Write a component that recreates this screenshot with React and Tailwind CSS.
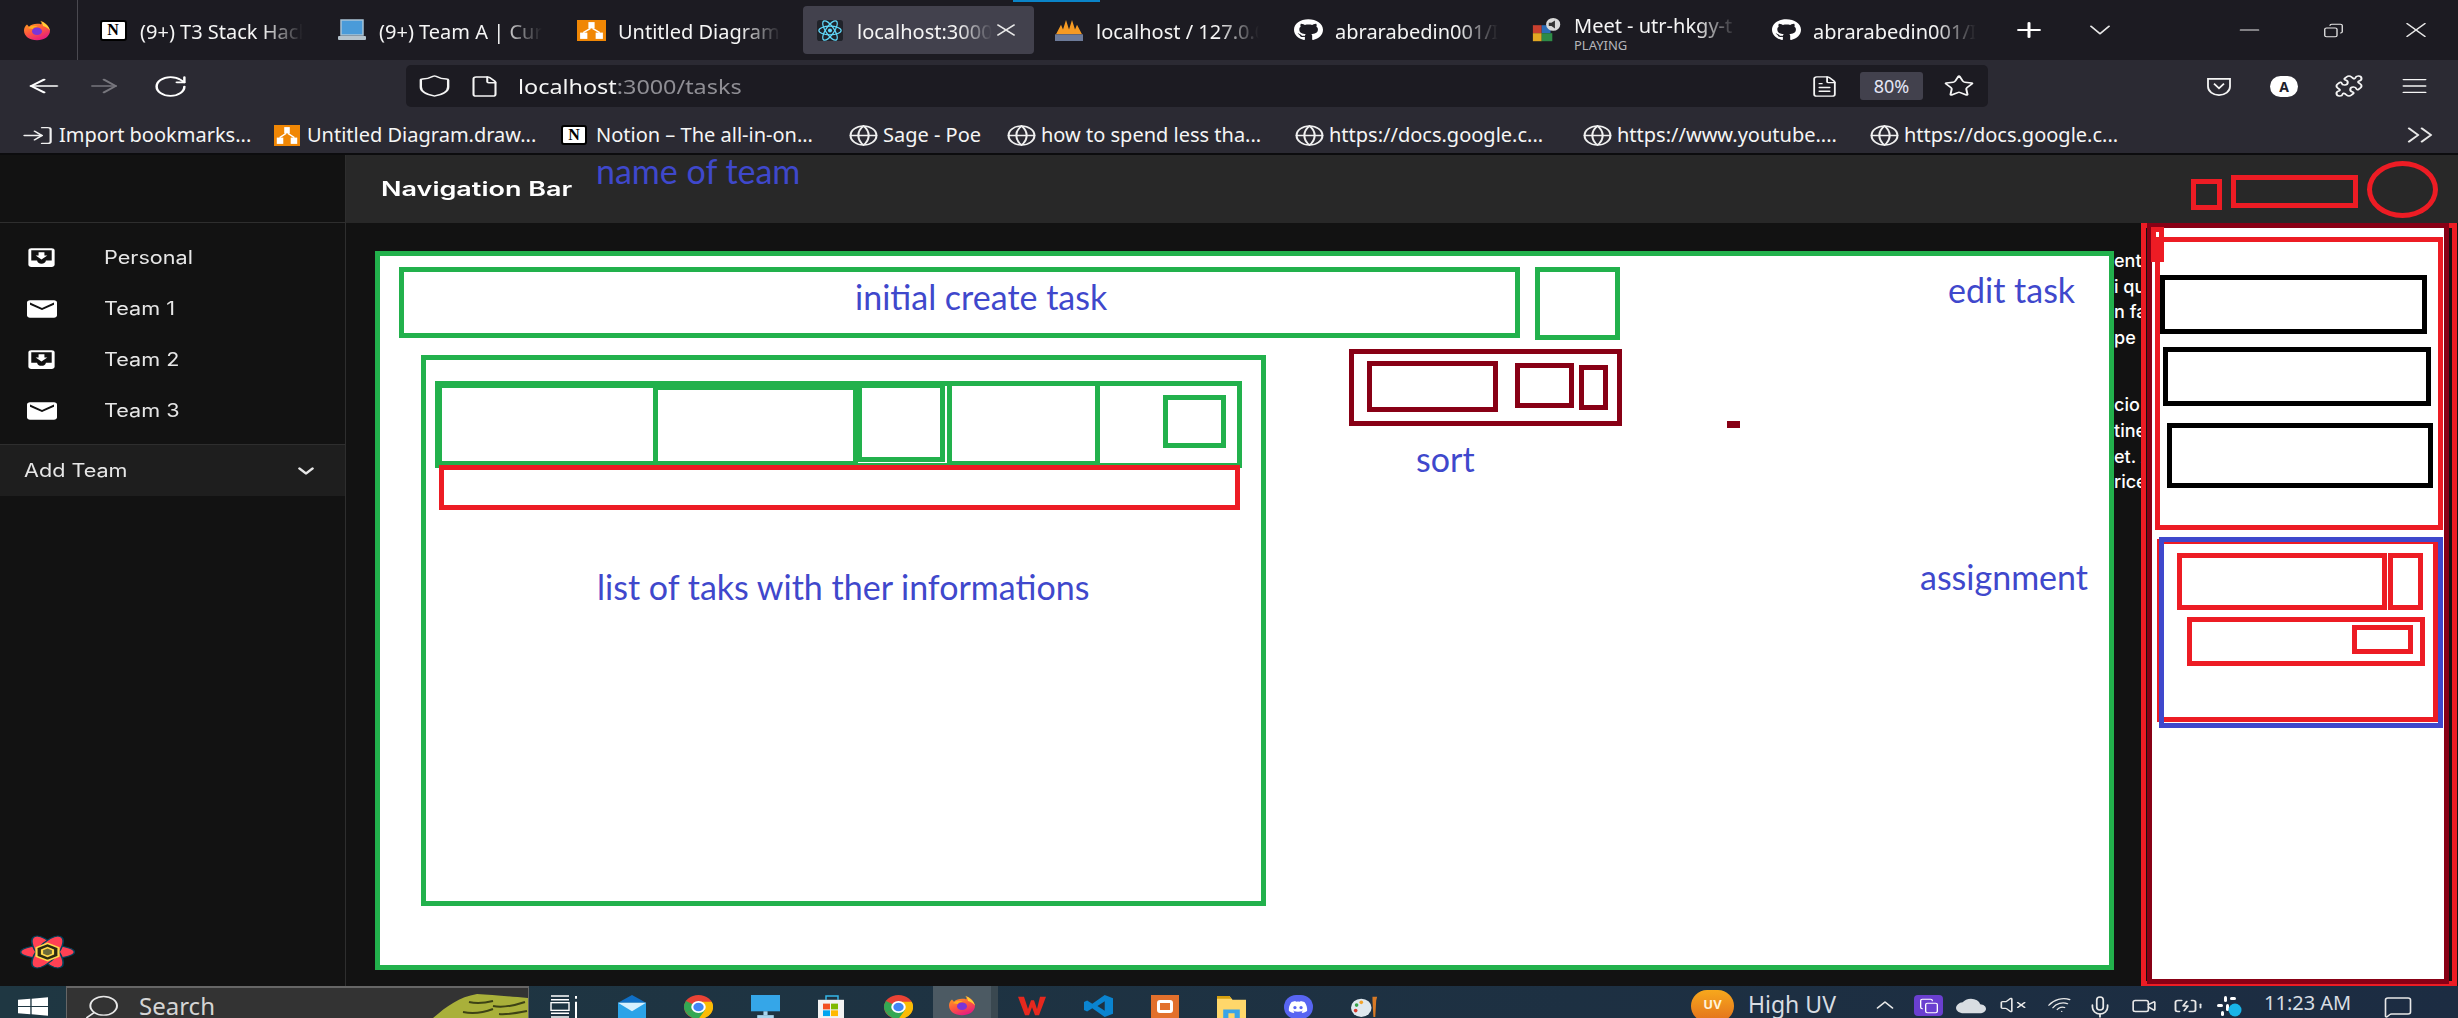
import React from "react";
import {
  ArrowLeft, ArrowRight, RotateCw, Shield, File, FileText, Star, X, Plus, ChevronDown, Minus, Copy,
  Globe, Puzzle, Menu, ChevronsRight, Search, ChevronUp, VolumeX, Wifi, Mic, MessageSquare, LogIn, Video, BatteryCharging,
} from "lucide-react";
import { MdMoveToInbox, MdMail, MdCloud } from "react-icons/md";
import { FaGithub, FaDiscord, FaWindows } from "react-icons/fa";

const sans = "font-['Noto_Sans','Open_Sans',sans-serif]";

function Firefox({ className }) {
  return (
    <svg viewBox="0 0 28 28" preserveAspectRatio="none" className={className}>
      <defs>
        <linearGradient id="ffg" x1="0.2" y1="0" x2="0.7" y2="1">
          <stop offset="0" stopColor="#ffa51f" />
          <stop offset="0.5" stopColor="#ff5a3c" />
          <stop offset="1" stopColor="#e31587" />
        </linearGradient>
      </defs>
      <path d="M18 1c3 2 8 6 9 13 0 8-6 13-13 13S1 22 1 14c0-3 1-6 3-8l2 3c2-3 5-4 8-4 2 0 3 0 4 1 1-2 1-3 0-5z" fill="url(#ffg)" />
      <circle cx="14" cy="15" r="5" fill="#7a35d8" />
      <path d="M17 1c5 3 9 7 10 13-2-3-4-5-7-6 0-2-1-5-3-7z" fill="#ffd234" />
      <path d="M5 11c3-4 7-4 10-2-3 0-5 1-5 3z" fill="#ffb01f" />
    </svg>
  );
}

function Notion({ className }) {
  return (
    <span className={`flex items-center justify-center bg-white border-[2px] border-black rounded-[3px] text-black font-bold font-['Liberation_Serif',serif] text-[16px] leading-none ${className}`}>
      N
    </span>
  );
}

function Drawio({ className }) {
  return (
    <svg viewBox="0 0 28 20" preserveAspectRatio="none" className={className}>
      <rect width="28" height="20" fill="#f08705" />
      <rect x="11" y="2" width="6" height="6" fill="#fff" />
      <rect x="3" y="12" width="7" height="6" fill="#fff" />
      <rect x="18" y="12" width="7" height="6" fill="#fff" />
      <path d="M13 8l-7 4M15 8l7 4" stroke="#fff" strokeWidth="1.5" />
    </svg>
  );
}

function Laptop({ className }) {
  return (
    <svg viewBox="0 0 30 22" preserveAspectRatio="none" className={className}>
      <rect x="4" y="1" width="22" height="15" fill="#4a9bd9" stroke="#a9c4d6" strokeWidth="1.5" />
      <rect x="1" y="17" width="28" height="4" rx="1" fill="#b5c3cc" />
    </svg>
  );
}

function ReactTab({ className }) {
  return (
    <svg viewBox="0 0 28 22" preserveAspectRatio="none" className={className}>
      <rect width="28" height="22" rx="3" fill="#20232a" />
      <g fill="none" stroke="#61dafb" strokeWidth="1.3">
        <ellipse cx="14" cy="11" rx="12" ry="4.5" />
        <ellipse cx="14" cy="11" rx="12" ry="4.5" transform="rotate(55 14 11)" />
        <ellipse cx="14" cy="11" rx="12" ry="4.5" transform="rotate(-55 14 11)" />
      </g>
      <circle cx="14" cy="11" r="2.2" fill="#61dafb" />
    </svg>
  );
}

function Pma({ className }) {
  return (
    <svg viewBox="0 0 30 22" preserveAspectRatio="none" className={className}>
      <path d="M2 15L7 5l2 5 3-10 3 10 3-10 3 10 2-5 5 10z" fill="#f59a23" />
      <rect x="1" y="15" width="28" height="7" fill="#6c7a99" />
    </svg>
  );
}

function MeetIcon({ className }) {
  return (
    <svg viewBox="0 0 34 30" preserveAspectRatio="none" className={className}>
      <rect x="1" y="9" width="10" height="10" fill="#c9402f" />
      <rect x="11" y="9" width="10" height="10" fill="#2b6cb5" />
      <rect x="1" y="19" width="10" height="10" fill="#e2a823" />
      <rect x="11" y="19" width="12" height="10" fill="#2e8b47" />
      <circle cx="24" cy="8" r="8" fill="#d9d9d9" />
      <path d="M19 6h3l4-3v10l-4-3h-3z" fill="#333" />
    </svg>
  );
}

function Logo({ className }) {
  return (
    <svg viewBox="0 0 100 100" preserveAspectRatio="none" className={className}>
      <g fill="#ff4154" stroke="#00435b" strokeWidth="3">
        <ellipse cx="50" cy="50" rx="49" ry="19" />
        <ellipse cx="50" cy="50" rx="49" ry="19" transform="rotate(62 50 50)" />
        <ellipse cx="50" cy="50" rx="49" ry="19" transform="rotate(-62 50 50)" />
      </g>
      <polygon points="50,26 70,38 70,62 50,74 30,62 30,38" fill="#2b2a12" stroke="#ffd94c" strokeWidth="4" />
      <polygon points="50,38 60,44 60,56 50,62 40,56 40,44" fill="#6b6a3a" stroke="#ffd94c" strokeWidth="4" />
    </svg>
  );
}

function Chrome({ className }) {
  return (
    <svg viewBox="0 0 28 28" className={className} preserveAspectRatio="none">
      <circle cx="14" cy="14" r="14" fill="#ea4335" />
      <path d="M14 14L2 21A14 14 0 0 1 2 7z" fill="#34a853" />
      <path d="M14 14l-12 7A14 14 0 0 0 26 21z" fill="#34a853" />
      <path d="M14 8h12.8A14 14 0 0 1 14 28l6-10z" fill="#fbbc04" />
      <circle cx="14" cy="14" r="7" fill="#fff" />
      <circle cx="14" cy="14" r="5" fill="#4285f4" />
    </svg>
  );
}

function Tab({ icon, children, active, close, sub }) {
  return (
    <div className={`relative w-[231px] h-[48px] mx-[4px] shrink-0 flex items-center rounded-[4px] ${active ? "bg-[#42414d]" : ""}`}>
      <div className="w-[54px] shrink-0 flex justify-center">{icon}</div>
      <div className={`flex flex-col min-w-0 ${sub ? "mt-[2px]" : "mt-[3px]"}`}>
        <div className={`overflow-hidden whitespace-nowrap text-[#f5f5f5] text-[20px] leading-[24px] [mask-image:linear-gradient(to_right,black_75%,transparent)] ${active ? "w-[135px]" : "w-[163px]"}`}>
          {children}
        </div>
        {sub ? <div className="text-[#b5b5b9] text-[13px] leading-[13px] -mb-[3px] mt-[1px]">{sub}</div> : null}
      </div>
      {close ? <X className="ml-[-2px] w-[32px] h-[20px] text-[#e8e8e8] shrink-0" strokeWidth={1.5} preserveAspectRatio="none" /> : null}
    </div>
  );
}

function Bookmark({ className, icon, children }) {
  return (
    <div className={`flex items-center shrink-0 h-full ${className}`}>
      <div className="w-[26px] flex justify-center shrink-0">{icon}</div>
      <span className="ml-[-4px] text-[20px] whitespace-nowrap text-[#f5f5f5]">{children}</span>
    </div>
  );
}

function BmGlobe() {
  return <Globe className="w-[31px] h-[23px] text-[#f0f0f0] shrink-0" strokeWidth={1.6} preserveAspectRatio="none" />;
}

function Slot({ className, children }) {
  return <div className={`flex justify-center items-center shrink-0 ${className}`}>{children}</div>;
}

function SideItem({ icon, children }) {
  return (
    <div className="h-[51px] flex items-center">
      <div className="w-[83px] flex justify-center shrink-0">{icon}</div>
      <span className="ml-[21px] text-[18px] text-[#e6e6e6] origin-left scale-x-[1.2] font-['Inter',sans-serif]">{children}</span>
    </div>
  );
}

function Box({ className }) {
  return <div className={`absolute ${className}`} />;
}

function Label({ className, children }) {
  return <div className={`absolute whitespace-nowrap text-[#3f48cc] font-['Lato',sans-serif] leading-none text-[34px] ${className}`}>{children}</div>;
}

export default function App() {
  return (
    <div className={`relative w-[2458px] h-[1018px] overflow-hidden flex flex-col bg-[#121212] ${sans}`}>
      {/* tab strip */}
      <div className="h-[60px] shrink-0 bg-[#1c1b22] flex items-center relative">
        <div className="w-[78px] h-full shrink-0 border-r border-[#4a4950] flex items-center justify-center pr-[3px]">
          <Firefox className="w-[28px] h-[21px]" />
        </div>
        <div className="flex items-center pl-[4px]">
          <Tab icon={<Notion className="w-[27px] h-[21px]" />}>(9+) T3 Stack Hack</Tab>
          <Tab icon={<Laptop className="w-[30px] h-[22px]" />}>(9+) Team A | Cur</Tab>
          <Tab icon={<Drawio className="w-[29px] h-[21px]" />}>Untitled Diagram.</Tab>
          <Tab active close icon={<ReactTab className="w-[26px] h-[21px]" />}>localhost:3000/</Tab>
          <Tab icon={<Pma className="w-[30px] h-[21px]" />}>localhost / 127.0.0</Tab>
          <Tab icon={<FaGithub className="w-[29px] h-[22px] text-white" preserveAspectRatio="none" />}>abrarabedin001/I</Tab>
          <Tab sub="PLAYING" icon={<MeetIcon className="w-[30px] h-[24px]" />}>Meet - utr-hkgy-t</Tab>
          <Tab icon={<FaGithub className="w-[29px] h-[22px] text-white" preserveAspectRatio="none" />}>abrarabedin001/I</Tab>
        </div>
        <Slot className="w-[36px] ml-[17px]"><Plus className="w-[38px] h-[24px] text-white" strokeWidth={2} preserveAspectRatio="none" /></Slot>
        <Slot className="w-[36px] ml-[35px]"><ChevronDown className="w-[44px] h-[30px] text-[#e8e8e8]" strokeWidth={1.3} preserveAspectRatio="none" /></Slot>
        <Slot className="w-[40px] ml-[111px]"><Minus className="w-[31px] h-[22px] text-[#e8e8e8]" strokeWidth={1.2} preserveAspectRatio="none" /></Slot>
        <Slot className="w-[40px] ml-[44px]"><Copy className="w-[21px] h-[15px] text-[#e8e8e8] -scale-x-100" strokeWidth={1.5} preserveAspectRatio="none" /></Slot>
        <Slot className="w-[40px] ml-[43px]"><X className="w-[36px] h-[26px] text-[#e8e8e8]" strokeWidth={1} preserveAspectRatio="none" /></Slot>
      </div>

      {/* toolbar */}
      <div className="h-[47px] shrink-0 bg-[#2b2a33] flex items-start pt-[5px]">
        <div className="w-[406px] h-[42px] shrink-0 flex items-center text-white">
          <Slot className="w-[88px]"><ArrowLeft className="w-[44px] h-[22px]" strokeWidth={1.7} preserveAspectRatio="none" /></Slot>
          <Slot className="w-[40px] ml-[-4px]"><ArrowRight className="w-[44px] h-[22px] text-[#77767d]" strokeWidth={1.7} preserveAspectRatio="none" /></Slot>
          <Slot className="w-[40px] ml-[26px]"><RotateCw className="w-[37px] h-[25px]" strokeWidth={1.6} preserveAspectRatio="none" /></Slot>
        </div>
        <div className="w-[1582px] h-[42px] shrink-0 bg-[#1c1b22] rounded-[5px] flex items-center text-[#f5f5f5]">
          <Slot className="w-[56px]"><Shield className="w-[41px] h-[24px]" strokeWidth={1.4} preserveAspectRatio="none" /></Slot>
          <Slot className="w-[44px]"><File className="w-[33px] h-[23px]" strokeWidth={1.5} preserveAspectRatio="none" /></Slot>
          <div className="ml-[12px] pt-[3px] text-[19px] whitespace-nowrap origin-left scale-x-[1.23]">
            localhost<span className="text-[#8f8e94]">:3000/tasks</span>
          </div>
          <div className="flex-1" />
          <Slot className="w-[40px]"><FileText className="w-[31px] h-[23px]" strokeWidth={1.4} preserveAspectRatio="none" /></Slot>
          <div className="w-[63px] h-[28px] ml-[16px] rounded-[3px] bg-[#42414d] text-[18px] flex items-center justify-center text-[#e4e6f5]">80%</div>
          <Slot className="w-[40px] ml-[16px] mr-[9px]"><Star className="w-[32px] h-[24px]" strokeWidth={1.5} preserveAspectRatio="none" /></Slot>
        </div>
        <div className="flex items-center h-[42px] text-[#f5f5f5]">
          <Slot className="w-[40px] ml-[211px]">
            <svg viewBox="0 0 26 20" preserveAspectRatio="none" className="w-[26px] h-[19px]" fill="none" stroke="currentColor" strokeWidth="1.8">
              <path d="M2 2h22v8c0 5-5 9-11 9S2 15 2 10z" />
              <path d="M8 7l5 5 5-5" />
            </svg>
          </Slot>
          <Slot className="w-[40px] ml-[25px]">
            <div className="w-[28px] h-[21px] rounded-full bg-white text-[#20202a] text-[14px] font-bold flex items-center justify-center">A</div>
          </Slot>
          <Slot className="w-[40px] ml-[25px]"><Puzzle className="w-[30px] h-[24px]" strokeWidth={1.6} preserveAspectRatio="none" /></Slot>
          <Slot className="w-[40px] ml-[25px]"><Menu className="w-[33px] h-[22px]" strokeWidth={1.5} preserveAspectRatio="none" /></Slot>
        </div>
      </div>

      {/* bookmarks */}
      <div className="h-[46px] shrink-0 bg-[#2b2a33] flex items-center pl-[24px] pt-[10px]">
        <Bookmark className="w-[250px]" icon={<LogIn className="w-[35px] h-[21px] text-[#f0f0f0] shrink-0" strokeWidth={1.5} preserveAspectRatio="none" />}>
          <span className="ml-[13px]">Import bookmarks...</span>
        </Bookmark>
        <Bookmark className="w-[287px]" icon={<Drawio className="w-[29px] h-[21px]" />}>
          <span className="ml-[11px]">Untitled Diagram.draw...</span>
        </Bookmark>
        <Bookmark className="w-[289px]" icon={<Notion className="w-[26px] h-[20px]" />}>
          <span className="ml-[13px]">Notion – The all-in-on...</span>
        </Bookmark>
        <Bookmark className="w-[158px]" icon={<BmGlobe />}><span className="ml-[11px]">Sage - Poe</span></Bookmark>
        <Bookmark className="w-[288px]" icon={<BmGlobe />}><span className="ml-[11px]">how to spend less tha...</span></Bookmark>
        <Bookmark className="w-[288px]" icon={<BmGlobe />}><span className="ml-[11px]">https://docs.google.c...</span></Bookmark>
        <Bookmark className="w-[287px]" icon={<BmGlobe />}><span className="ml-[11px]">https://www.youtube....</span></Bookmark>
        <Bookmark className="w-[527px]" icon={<BmGlobe />}><span className="ml-[11px]">https://docs.google.c...</span></Bookmark>
        <ChevronsRight className="w-[44px] h-[32px] text-[#e8e8e8] shrink-0" strokeWidth={1.3} preserveAspectRatio="none" />
      </div>

      {/* app */}
      <div className="flex-1 min-h-0 flex border-t-[2px] border-[#0c0c0e] font-['Inter',sans-serif]">
        <aside className="w-[346px] shrink-0 bg-[#121212] border-r-[1.5px] border-[#2e2e2e] flex flex-col">
          <div className="h-[68px] shrink-0 border-b border-[#2e2e2e]" />
          <div className="pt-[9px] flex flex-col">
            <SideItem icon={<MdMoveToInbox className="w-[35px] h-[25px] text-white" preserveAspectRatio="none" />}>Personal</SideItem>
            <SideItem icon={<MdMail className="w-[36px] h-[26px] text-white" preserveAspectRatio="none" />}>Team 1</SideItem>
            <SideItem icon={<MdMoveToInbox className="w-[35px] h-[25px] text-white" preserveAspectRatio="none" />}>Team 2</SideItem>
            <SideItem icon={<MdMail className="w-[36px] h-[26px] text-white" preserveAspectRatio="none" />}>Team 3</SideItem>
          </div>
          <div className="mt-[8px] h-[52px] shrink-0 bg-[#1e1e1e] border-t border-[#2e2e2e] flex items-center justify-between pl-[24px] pr-[26px]">
            <span className="text-[18px] text-[#e6e6e6] origin-left scale-x-[1.2]">Add Team</span>
            <ChevronDown className="w-[26px] h-[20px] text-[#e6e6e6]" strokeWidth={2.6} preserveAspectRatio="none" />
          </div>
          <div className="flex-1" />
          <div className="pb-[16px] pl-[20px]">
            <Logo className="w-[55px] h-[36px]" />
          </div>
        </aside>
        <main className="flex-1 flex flex-col min-w-0">
          <div className="h-[68px] shrink-0 bg-[#282828] flex items-center pl-[35px]">
            <span className="text-[20px] font-semibold text-white origin-left scale-x-[1.35]">Navigation Bar</span>
          </div>
          <div className="flex-1 bg-[#121212]" />
        </main>
      </div>

      {/* taskbar */}
      <div className="h-[32px] shrink-0 overflow-hidden bg-gradient-to-r from-[#1f3742] to-[#1c2c42] flex items-start text-white">
        <div className="w-[66px] h-full shrink-0 pt-[10px] pl-[18px]">
          <FaWindows className="w-[30px] h-[21px] text-white" preserveAspectRatio="none" />
        </div>
        <div className="relative w-[463px] h-full shrink-0 bg-[#333333] border-t-[2px] border-x-[1px] border-[#666666] flex items-start overflow-hidden">
          <Search className="ml-[15px] mt-[5px] w-[40px] h-[28px] text-[#e8e8e8] -scale-x-100 shrink-0" strokeWidth={1.2} preserveAspectRatio="none" />
          <span className="ml-[17px] text-[24px] leading-[36px] text-[#d5d5d5]">Search</span>
          <svg viewBox="0 0 95 24" preserveAspectRatio="none" className="absolute right-0 top-[6px] w-[95px] h-[24px]">
            <path d="M0 24C14 12 26 3 44 0c14 1 30 2 51 4v20z" fill="#a9b03a" />
            <path d="M36 8c8 2 16 1 24-1M60 12c10 2 20 0 32-4M30 18c10 2 22 0 30-3M66 20c8 1 18-1 28-3" stroke="#3d4215" strokeWidth="2" fill="none" />
          </svg>
        </div>
        <div className="flex items-start pt-[9px]">
          <Slot className="w-[69px]">
            <svg viewBox="0 0 28 24" preserveAspectRatio="none" className="w-[28px] h-[23px]" fill="none" stroke="#fff" strokeWidth="1.4">
              <path d="M1 1h18M1 5h18M1 19h18M1 23h18" />
              <rect x="1" y="8" width="18" height="8" />
              <path d="M26 1v3M26 7v17" strokeWidth="2" />
            </svg>
          </Slot>
          <Slot className="w-[67px]">
            <svg viewBox="0 0 28 24" preserveAspectRatio="none" className="w-[28px] h-[23px]">
              <path d="M14 0l14 8H0z" fill="#0f6fc6" />
              <rect y="8" width="28" height="16" fill="#2ba3e8" />
              <path d="M0 8l14 9 14-9z" fill="#d6f0ff" />
            </svg>
          </Slot>
          <Slot className="w-[67px]"><Chrome className="w-[29px] h-[24px]" /></Slot>
          <Slot className="w-[67px]">
            <svg viewBox="0 0 28 24" preserveAspectRatio="none" className="w-[29px] h-[23px]">
              <rect width="28" height="17" fill="#35a6e8" />
              <rect x="12" y="17" width="4" height="4" fill="#a8d5ee" />
              <rect x="6" y="21" width="16" height="3" fill="#a8d5ee" />
            </svg>
          </Slot>
          <Slot className="w-[66px]">
            <svg viewBox="0 0 28 24" preserveAspectRatio="none" className="w-[28px] h-[23px]">
              <path d="M8 5V1h12v4" stroke="#35b7e8" strokeWidth="1.5" fill="none" />
              <rect y="5" width="26" height="19" fill="#f3f3f3" />
              <rect x="5" y="9" width="7" height="6" fill="#f25022" />
              <rect x="13" y="9" width="7" height="6" fill="#7fba00" />
              <rect x="5" y="16" width="7" height="6" fill="#00a4ef" />
              <rect x="13" y="16" width="7" height="6" fill="#ffb900" />
            </svg>
          </Slot>
          <Slot className="w-[67px]"><Chrome className="w-[29px] h-[24px]" /></Slot>
          <div className="-mt-[9px] pt-[9px] w-[58px] h-[32px] bg-[#4c5a63] flex justify-center shrink-0 ml-[1px]">
            <Firefox className="w-[28px] h-[21px]" />
          </div>
          <div className="-mt-[9px] w-[7px] h-[32px] bg-[#3a4850] shrink-0" />
          <Slot className="w-[67px]">
            <svg viewBox="0 0 28 24" preserveAspectRatio="none" className="w-[28px] h-[21px]">
              <path d="M0 2h6l4 14 3-10h3l3 10 3-14h6l-7 21h-4l-3-9-3 9h-4z" fill="#e5281e" />
            </svg>
          </Slot>
          <Slot className="w-[66px]">
            <svg viewBox="0 0 28 28" preserveAspectRatio="none" className="w-[29px] h-[22px]">
              <path d="M20 0l8 4v20l-8 4-12-11-5 4-3-2v-10l3-2 5 4zM20 8l-7 6 7 6z" fill="#0a84d0" />
            </svg>
          </Slot>
          <Slot className="w-[67px]">
            <div className="w-[28px] h-[23px] bg-[#e2702c] flex items-center justify-center">
              <div className="w-[16px] h-[13px] border-[3px] border-white rounded-[3px]" />
            </div>
          </Slot>
          <Slot className="w-[67px]">
            <svg viewBox="0 0 28 24" preserveAspectRatio="none" className="w-[29px] h-[23px]">
              <path d="M0 1h12l3 4h13v19H0z" fill="#ffd76a" />
              <path d="M0 1h12l2 3H0z" fill="#d6a00f" />
              <path d="M6 24v-9h16v9h-5v-5h-6v5z" fill="#3aa4e8" />
            </svg>
          </Slot>
          <Slot className="w-[66px]">
            <div className="w-[29px] h-[24px] rounded-full bg-[#5865f2] flex items-center justify-center">
              <FaDiscord className="w-[20px] h-[14px] text-white" preserveAspectRatio="none" />
            </div>
          </Slot>
          <Slot className="w-[67px]">
            <svg viewBox="0 0 30 24" preserveAspectRatio="none" className="w-[28px] h-[22px]">
              <ellipse cx="11" cy="14" rx="11" ry="10" fill="#dfe8ee" />
              <circle cx="6" cy="11" r="2" fill="#37a34a" />
              <circle cx="11" cy="8" r="2" fill="#f2a32b" />
              <circle cx="5" cy="17" r="2" fill="#d8392b" />
              <path d="M23 2h5l-1 4-1 18h-2l-1-18z" fill="#d87a26" />
            </svg>
          </Slot>
        </div>
        <div className="flex items-start ml-[293px] w-[144px] shrink-0">
          <div className="w-[43px] h-[32px] mt-[4px] rounded-full bg-gradient-to-b from-[#f7a81c] to-[#e2701c] text-[13px] font-bold flex items-start justify-center pt-[5px] text-[#fff3d8] shrink-0">UV</div>
          <span className="ml-[14px] text-[23px] leading-[36px] text-[#d8dde2] whitespace-nowrap">High UV</span>
        </div>
        <div className="flex items-start pt-[9px] ml-[35px] text-[#e8e8e8]">
          <Slot className="w-[30px] h-[20px]"><ChevronUp className="w-[34px] h-[24px]" strokeWidth={1.4} preserveAspectRatio="none" /></Slot>
          <Slot className="w-[29px] h-[21px] ml-[14px] rounded-[4px] bg-[#6a3fd0]">
            <Copy className="w-[20px] h-[16px] text-white" strokeWidth={1.6} preserveAspectRatio="none" />
          </Slot>
          <Slot className="w-[30px] ml-[13px]"><MdCloud className="w-[32px] h-[22px] text-[#d8dde2]" preserveAspectRatio="none" /></Slot>
          <Slot className="w-[30px] ml-[12px]"><VolumeX className="w-[28px] h-[20px]" strokeWidth={1.4} preserveAspectRatio="none" /></Slot>
          <Slot className="w-[30px] ml-[17px]"><Wifi className="w-[26px] h-[20px] -rotate-[15deg]" strokeWidth={1.4} preserveAspectRatio="none" /></Slot>
          <Slot className="w-[30px] ml-[10px]"><Mic className="w-[26px] h-[24px]" strokeWidth={1.6} preserveAspectRatio="none" /></Slot>
          <Slot className="w-[30px] ml-[14px]"><Video className="w-[26px] h-[22px]" strokeWidth={1.5} preserveAspectRatio="none" /></Slot>
          <Slot className="w-[30px] ml-[14px]"><BatteryCharging className="w-[32px] h-[22px]" strokeWidth={1.5} preserveAspectRatio="none" /></Slot>
          <Slot className="w-[30px] ml-[11px]">
            <svg viewBox="0 0 26 22" preserveAspectRatio="none" className="w-[26px] h-[22px]">
              <rect x="8" y="1" width="3" height="6" rx="1.5" fill="#fff" />
              <rect x="14" y="2" width="6" height="3" rx="1.5" fill="#fff" />
              <rect x="1" y="9" width="6" height="3" rx="1.5" fill="#fff" />
              <rect x="10" y="9" width="3" height="7" rx="1.5" fill="#fff" />
              <rect x="5" y="16" width="3" height="5" rx="1.5" fill="#fff" />
              <circle cx="19" cy="15" r="6.5" fill="#19b5e8" />
            </svg>
          </Slot>
          <span className="ml-[20px] -mt-[9px] text-[20px] leading-[34px] text-[#d8dde2] whitespace-nowrap">11:23 AM</span>
          <Slot className="w-[30px] ml-[32px]"><MessageSquare className="w-[34px] h-[24px]" strokeWidth={1.3} preserveAspectRatio="none" /></Slot>
        </div>
      </div>

      {/* blue playing indicator */}
      <Box className="left-[1013px] top-0 w-[87px] h-[2px] bg-[#0a84c8]" />

      {/* clipped page text between the two sketch frames */}
      <div className="absolute left-[2114px] top-[248px] w-[27px] overflow-hidden font-['Inter',sans-serif] text-[18px] leading-[25.6px] text-white whitespace-nowrap font-medium">
        <p>ent.</p>
        <p>i qu</p>
        <p>n fa</p>
        <p>pe</p>
        <p className="mt-[42px]">cio</p>
        <p>tine</p>
        <p>et. A</p>
        <p>rice</p>
      </div>

      {/* sketch: main frame */}
      <Box className="left-[375px] top-[251px] w-[1739px] h-[719px] border-[5px] border-[#22b14c] bg-white" />
      <Box className="left-[399px] top-[267px] w-[1121px] h-[71px] border-[5px] border-[#22b14c]" />
      <Box className="left-[1535px] top-[267px] w-[85px] h-[73px] border-[5px] border-[#22b14c]" />
      <Box className="left-[421px] top-[355px] w-[845px] h-[551px] border-[5px] border-[#22b14c]" />
      <Box className="left-[435px] top-[381px] w-[807px] h-[87px] border-[5px] border-[#22b14c]" />
      <Box className="left-[437px] top-[383px] w-[221px] h-[83px] border-[5px] border-[#22b14c]" />
      <Box className="left-[653px] top-[385px] w-[205px] h-[81px] border-[5px] border-[#22b14c]" />
      <Box className="left-[857px] top-[383px] w-[88px] h-[79px] border-[5px] border-[#22b14c]" />
      <Box className="left-[947px] top-[381px] w-[153px] h-[85px] border-[5px] border-[#22b14c]" />
      <Box className="left-[1163px] top-[395px] w-[63px] h-[53px] border-[5px] border-[#22b14c]" />
      <Box className="left-[439px] top-[465px] w-[801px] h-[45px] border-[5px] border-[#ed1c24]" />

      {/* sketch: sort */}
      <Box className="left-[1349px] top-[349px] w-[273px] h-[77px] border-[5px] border-[#880015]" />
      <Box className="left-[1367px] top-[361px] w-[131px] h-[51px] border-[5px] border-[#880015]" />
      <Box className="left-[1515px] top-[363px] w-[59px] h-[45px] border-[5px] border-[#880015]" />
      <Box className="left-[1579px] top-[365px] w-[29px] h-[45px] border-[5px] border-[#880015]" />
      <Box className="left-[1727px] top-[421px] w-[13px] h-[7px] bg-[#880015]" />

      {/* sketch: nav bar */}
      <Box className="left-[2191px] top-[179px] w-[31px] h-[31px] border-[5px] border-[#ed1c24]" />
      <Box className="left-[2231px] top-[175px] w-[127px] h-[33px] border-[5px] border-[#ed1c24]" />
      <Box className="left-[2367px] top-[161px] w-[71px] h-[57px] border-[5px] border-[#ed1c24] rounded-[50%]" />

      {/* sketch: right panel */}
      <Box className="left-[2141px] top-[223px] w-[316px] h-[763px] border-[5px] border-[#ed1c24]" />
      <Box className="left-[2147px] top-[223px] w-[302px] h-[761px] border-[5px] border-[#880015] bg-white" />
      <Box className="left-[2155px] top-[237px] w-[288px] h-[293px] border-[5px] border-[#ed1c24]" />
      <Box className="left-[2151px] top-[227px] w-[13px] h-[35px] bg-[#ed1c24]" />
      <Box className="left-[2156px] top-[232px] w-[3px] h-[5px] bg-white" />
      <Box className="left-[2160px] top-[275px] w-[267px] h-[59px] border-[5px] border-black" />
      <Box className="left-[2163px] top-[347px] w-[268px] h-[59px] border-[5px] border-black" />
      <Box className="left-[2167px] top-[423px] w-[266px] h-[65px] border-[5px] border-black" />
      <Box className="left-[2157px] top-[539px] w-[281px] h-[183px] border-[5px] border-[#ed1c24]" />
      <Box className="left-[2159px] top-[537px] w-[284px] h-[191px] border-[5px] border-[#3f48cc]" />
      <Box className="left-[2164px] top-[542px] w-[274px] h-[2px] bg-[#ed1c24]" />
      <Box className="left-[2164px] top-[717px] w-[274px] h-[5px] bg-[#ed1c24]" />
      <Box className="left-[2177px] top-[553px] w-[210px] h-[57px] border-[5px] border-[#ed1c24]" />
      <Box className="left-[2388px] top-[553px] w-[35px] h-[57px] border-[5px] border-[#ed1c24]" />
      <Box className="left-[2187px] top-[617px] w-[238px] h-[49px] border-[5px] border-[#ed1c24]" />
      <Box className="left-[2352px] top-[625px] w-[61px] h-[29px] border-[5px] border-[#ed1c24]" />

      {/* sketch: labels */}
      <Label className="left-[596px] top-[154px]">name of team</Label>
      <Label className="left-[855px] top-[280px]">initial create task</Label>
      <Label className="left-[1948px] top-[273px]">edit task</Label>
      <Label className="left-[1416px] top-[442px]">sort</Label>
      <Label className="left-[597px] top-[570px]">list of taks with ther informations</Label>
      <Label className="left-[1920px] top-[560px]">assignment</Label>
    </div>
  );
}
